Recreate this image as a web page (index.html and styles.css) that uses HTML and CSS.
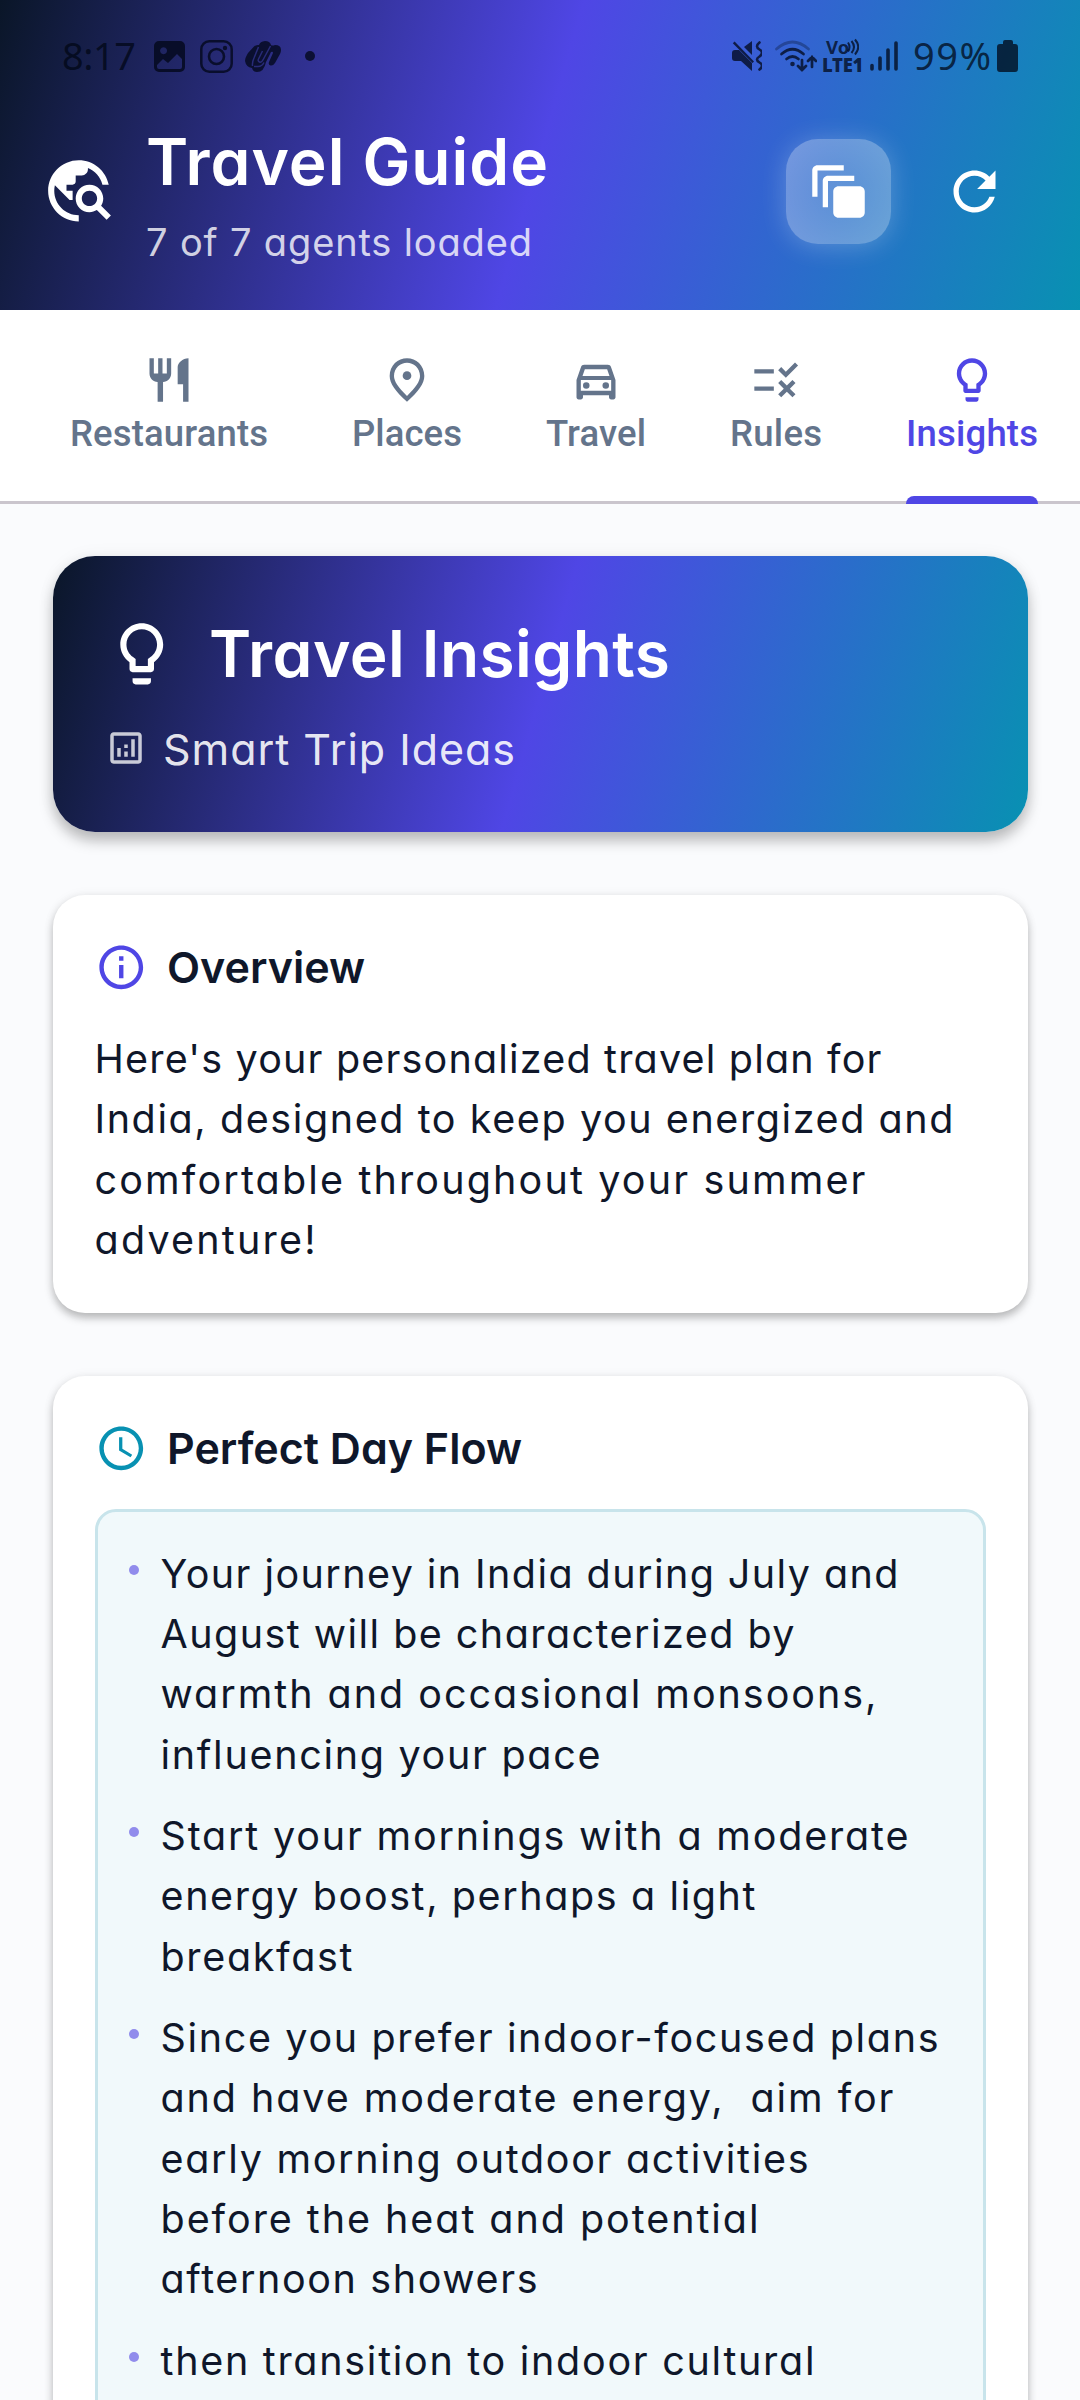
FILE: index.html
```html
<!DOCTYPE html>
<html lang="en">
<head>
<meta charset="utf-8">
<title>Travel Guide</title>
<link rel="stylesheet" href="styles.css">
</head>
<body>
<header class="header">
  <div class="status">
    <div class="status-left">
      <span class="status-time" data-width="74">8:17</span>
      <svg class="st-photo" viewBox="0 0 31 31"><path fill-rule="evenodd" d="M5 0h21a5 5 0 0 1 5 5v21a5 5 0 0 1-5 5H5a5 5 0 0 1-5-5V5a5 5 0 0 1 5-5zM9.500 6.300a3.500 3.500 0 1 0 .1 0zM3 24v2a2 2 0 0 0 2 2h21a2 2 0 0 0 2-2v-8l-5-5-9 9-5-4z"/></svg>
      <svg class="st-insta" viewBox="0 0 33 33"><rect x="1.300" y="1.300" width="30.400" height="30.400" rx="8" fill="none" stroke="currentColor" stroke-width="2.500"/><circle cx="16.500" cy="16.500" r="7.500" fill="none" stroke="currentColor" stroke-width="2.600"/><circle cx="25" cy="8" r="2.200"/></svg>
      <svg class="st-brand" viewBox="0 0 36 31"><path d="M9 5.500q2-2 5-1.500 1-3.500 6-4 5 0 6 4 1 1 4 0 6 0 6 5 0 2-1 4l-5 9q-2 3-4.500 2.500T24 21l4-9q0-2-2-1l-5 10q-2 10-9 10-4 0-5-4-6-1-7-7 0-3 3-8z"/><path d="M13.500 6 9 17q-2 4-1.500 8M25.500 5l-7 13q-2 4-4 3t-1-3l4-8M9 25.500h4q4 0 6-4" fill="none" stroke="#282b78" stroke-width="1.500"/></svg>
      <i class="st-dot"></i>
    </div>
    <div class="status-right">
      <svg class="st-mute" viewBox="0 0 30 30"><path d="M0 12q0-3 3-3h4l13 13v8L9 20H3q-3 0-3-3zM12 6l8-6v14zM2.600.6 22 20.500l-1.500 1.500L.8 2.300z"/><path d="M27.500 1.500q-5 4 0 7t0 7q-5 3 0 6t0 7" fill="none" stroke="currentColor" stroke-width="2.600" stroke-linecap="round"/></svg>
      <svg class="st-wifi" viewBox="0 0 42 32"><g fill="none" stroke="currentColor" stroke-width="2.700" stroke-linecap="round"><path d="M1.500 9q16-14 32 0" opacity=".4"/><path d="M6.500 14q11-9.500 22 0M11.500 19q6-5 12 0"/><path d="M27 20v10m-4-4 4 4 4-4M37 27V17m-4 4 4-4 4 4"/></g><circle cx="17.500" cy="24" r="2.300"/></svg>
      <div class="volte"><span data-width="21">Vo</span><svg viewBox="0 0 12 18"><path d="M1 4.500q3 4.500 0 9M4.500 3q5 6 0 12M8 1.500q6.500 7.500 0 15" fill="none" stroke="currentColor" stroke-width="2"/></svg><b data-width="38">LTE1</b></div>
      <svg class="st-signal" viewBox="0 0 28 30"><path d="M2 24.500V28M10 17v11M18 9v19M26 2v26" stroke="currentColor" stroke-width="3.600" stroke-linecap="round"/></svg>
      <span class="status-pct" data-width="78">99%</span>
      <svg class="st-battery" viewBox="0 0 21 32"><path d="M8 0h6q2 0 2 2v2h2q3 0 3 3v22q0 3-3 3H3q-3 0-3-3V7q0-3 3-3h3V2q0-2 2-2z"/></svg>
    </div>
  </div>
  <div class="appbar">
    <svg class="app-icon" viewBox="0 0 24 24"><path d="M19.300 16.900c.4-.7.7-1.500.7-2.400 0-2.500-2-4.500-4.500-4.500S11 12 11 14.500s2 4.500 4.500 4.500c.9 0 1.700-.3 2.400-.7l3.200 3.200 1.400-1.400-3.200-3.200zm-3.800.1c-1.400 0-2.500-1.100-2.500-2.500s1.100-2.500 2.500-2.500 2.500 1.100 2.500 2.500-1.100 2.500-2.500 2.500zM12 20v2C6.480 22 2 17.520 2 12S6.480 2 12 2c4.840 0 8.870 3.440 9.800 8h-2.070c-.64-2.460-2.400-4.470-4.730-5.410V5c0 1.100-.9 2-2 2h-2v2c0 .55-.45 1-1 1H8v2h2v3H9l-4.790-4.790C4.080 10.790 4 11.380 4 12c0 4.410 3.590 8 8 8z"/></svg>
    <div class="app-text">
      <h1 class="app-title"><span data-width="402">Travel Guide</span></h1>
      <p class="app-sub"><span data-width="386">7 of 7 agents loaded</span></p>
    </div>
    <button class="tool tool-active"><svg viewBox="0 0 24 24"><path d="M14 2H4c-1.100 0-2 .9-2 2v10h2V4h10V2zm4 4H8c-1.100 0-2 .9-2 2v10h2V8h10V6zm2 4h-8c-1.100 0-2 .9-2 2v8c0 1.100.9 2 2 2h8c1.100 0 2-.9 2-2v-8c0-1.100-.9-2-2-2z"/></svg></button>
    <button class="tool"><svg viewBox="0 0 24 24"><path d="M17.650 6.350C16.200 4.900 14.210 4 12 4c-4.420 0-7.990 3.580-7.990 8s3.570 8 7.990 8c3.730 0 6.840-2.550 7.730-6h-2.080c-.82 2.330-3.040 4-5.650 4-3.310 0-6-2.690-6-6s2.690-6 6-6c1.660 0 3.140.69 4.220 1.780L13 11h7V4l-2.350 2.350z"/></svg></button>
  </div>
</header>

<nav class="tabs">
  <a class="tab"><svg viewBox="0 0 24 24"><path d="M11 9H9V2H7v7H5V2H3v7c0 2.120 1.660 3.840 3.750 3.970V22h2.500v-9.030C11.340 12.840 13 11.120 13 9V2h-2v7zm5-3v8h2.500v8H21V2c-2.760 0-5 2.240-5 4z"/></svg><span data-width="198">Restaurants</span></a>
  <a class="tab"><svg viewBox="0 0 24 24"><path d="M12 2c4.200 0 8 3.220 8 8.200 0 3.320-2.670 7.250-8 11.800-5.330-4.550-8-8.480-8-11.800C4 5.220 7.800 2 12 2m0 2C9.020 4 6 6.240 6 10.200c0 2.340 1.950 5.440 6 9.140 4.050-3.700 6-6.790 6-9.140C18 6.240 14.980 4 12 4"/><circle cx="12" cy="10" r="2"/></svg><span data-width="110">Places</span></a>
  <a class="tab"><svg viewBox="0 0 24 24"><path d="M18.920 6.010C18.720 5.420 18.160 5 17.500 5h-11c-.66 0-1.210.42-1.420 1.010L3 12v8c0 .55.45 1 1 1h1c.55 0 1-.45 1-1v-1h12v1c0 .55.45 1 1 1h1c.55 0 1-.45 1-1v-8l-2.080-5.990zM6.850 7h10.290l1.080 3.110H5.770L6.850 7zM19 17H5v-5h14v5z"/><circle cx="7.500" cy="14.500" r="1.500"/><circle cx="16.500" cy="14.500" r="1.500"/></svg><span data-width="100">Travel</span></a>
  <a class="tab"><svg viewBox="0 0 24 24"><path d="M16.540 11L13 7.460l1.410-1.410 2.120 2.120 4.240-4.240 1.410 1.410L16.540 11zM11 7H2v2h9V7zm10 6.410L19.590 12 17 14.590 14.410 12 13 13.410 15.590 16 13 18.590 14.410 20 17 17.410 19.590 20 21 18.590 18.410 16 21 13.410zM11 15H2v2h9v-2z"/></svg><span data-width="92">Rules</span></a>
  <a class="tab tab-active"><svg viewBox="0 0 24 24"><path d="M9 21c0 .55.45 1 1 1h4c.55 0 1-.45 1-1v-1H9v1zm3-19C8.140 2 5 5.140 5 9c0 2.380 1.190 4.470 3 5.740V17c0 .55.45 1 1 1h6c.55 0 1-.45 1-1v-2.260c1.810-1.270 3-3.360 3-5.740 0-3.860-3.140-7-7-7zm2.850 11.100l-.85.6V16h-4v-2.300l-.85-.6C7.800 12.160 7 10.630 7 9c0-2.760 2.240-5 5-5s5 2.240 5 5c0 1.630-.8 3.160-2.150 4.100z"/></svg><span data-width="132">Insights</span></a>
</nav>

<main class="content">
  <section class="hero">
    <div class="hero-top">
      <svg viewBox="0 0 24 24"><path d="M9 21c0 .55.45 1 1 1h4c.55 0 1-.45 1-1v-1H9v1zm3-19C8.140 2 5 5.140 5 9c0 2.380 1.190 4.470 3 5.740V17c0 .55.45 1 1 1h6c.55 0 1-.45 1-1v-2.260c1.810-1.270 3-3.360 3-5.740 0-3.860-3.140-7-7-7zm2.850 11.100l-.85.6V16h-4v-2.300l-.85-.6C7.800 12.160 7 10.630 7 9c0-2.760 2.240-5 5-5s5 2.240 5 5c0 1.630-.8 3.160-2.150 4.100z"/></svg>
      <h2><span data-width="461">Travel Insights</span></h2>
    </div>
    <div class="hero-sub">
      <svg viewBox="0 0 24 24"><path d="M19 3H5c-1.100 0-2 .9-2 2v14c0 1.100.9 2 2 2h14c1.100 0 2-.9 2-2V5c0-1.100-.9-2-2-2zm0 16H5V5h14v14zM7 12h2v5H7zM15 7h2v10h-2zM11 14h2v3h-2zM11 10h2v2h-2z"/></svg>
      <p><span data-width="352">Smart Trip Ideas</span></p>
    </div>
  </section>

  <section class="card">
    <div class="card-head">
      <svg class="indigo" viewBox="0 0 24 24"><path d="M11 7h2v2h-2zm0 4h2v6h-2zm1-9C6.480 2 2 6.480 2 12s4.480 10 10 10 10-4.480 10-10S17.520 2 12 2zm0 18c-4.410 0-8-3.590-8-8s3.590-8 8-8 8 3.590 8 8-3.590 8-8 8z"/></svg>
      <h3><span data-width="198">Overview</span></h3>
    </div>
    <p class="body-text">
      <span data-width="787">Here's your personalized travel plan for</span>
      <span data-width="859">India, designed to keep you energized and</span>
      <span data-width="771">comfortable throughout your summer</span>
      <span data-width="221">adventure!</span>
    </p>
  </section>

  <section class="card card-flow">
    <div class="card-head">
      <svg class="teal" viewBox="0 0 24 24"><path d="M11.990 2C6.470 2 2 6.480 2 12s4.470 10 9.990 10C17.520 22 22 17.520 22 12S17.520 2 11.990 2zM12 20c-4.420 0-8-3.580-8-8s3.580-8 8-8 8 3.580 8 8-3.580 8-8 8zm.5-13H11v6l5.250 3.150.75-1.230-4.500-2.670z"/></svg>
      <h3><span data-width="355">Perfect Day Flow</span></h3>
    </div>
    <ul class="flow">
      <li class="body-text">
        <span data-width="738">Your journey in India during July and</span>
        <span data-width="634">August will be characterized by</span>
        <span data-width="716">warmth and occasional monsoons,</span>
        <span data-width="440">influencing your pace</span>
      </li>
      <li class="body-text">
        <span data-width="748">Start your mornings with a moderate</span>
        <span data-width="595">energy boost, perhaps a light</span>
        <span data-width="192">breakfast</span>
      </li>
      <li class="body-text">
        <span data-width="778">Since you prefer indoor-focused plans</span>
        <span data-width="733">and have moderate energy,&nbsp; aim for</span>
        <span data-width="648">early morning outdoor activities</span>
        <span data-width="598">before the heat and potential</span>
        <span data-width="377">afternoon showers</span>
      </li>
      <li class="body-text">
        <span data-width="654">then transition to indoor cultural</span>
      </li>
    </ul>
  </section>
</main>
<script src="fit.js"></script>
</body>
</html>
```
FILE: styles.css
```css
* { box-sizing: border-box; margin: 0; padding: 0; }

html, body { height: 2400px; overflow: hidden; }

body {
  width: 1080px;
  display: flex;
  flex-direction: column;
  background: #fafbfd;
  color: #0f172a;
  font-family: Inter, "Liberation Sans", sans-serif;
  font-feature-settings: "cv11";
}

svg { display: block; flex: none; fill: currentColor; }
span[data-width], b[data-width] { display: inline-block; white-space: nowrap; }

/* Header */
.header {
  height: 310px;
  flex: none;
  background: linear-gradient(106deg, #0a1628 0%, #4f46e5 50%, #0891b2 100%);
}

.status {
  height: 112px;
  padding: 0 62px 0 62px;
  display: flex;
  justify-content: space-between;
  align-items: center;
  color: rgba(0, 6, 20, .74);
  font-family: "Noto Sans", sans-serif;
  font-size: 38px;
  line-height: 52px;
  font-feature-settings: normal;
}
.status-left, .status-right { display: flex; align-items: center; }
.status-time, .status-pct { padding-bottom: 3px; }
.st-photo { width: 31px; height: 31px; margin-left: 18px; }
.st-insta { width: 33px; height: 33px; margin-left: 15px; }
.st-brand { width: 36px; height: 31px; margin-left: 12px; }
.st-dot { width: 10px; height: 10px; margin-left: 24px; border-radius: 50%; background: currentColor; }
.st-mute { width: 30px; height: 30px; }
.st-wifi { width: 42px; height: 32px; margin-left: 13px; }
.volte {
  display: grid;
  grid-template-columns: 25px 14px;
  width: 39px;
  margin-left: 5px;
  font-size: 18.500px;
  font-weight: 700;
  line-height: 18px;
}
.volte span { padding-left: 4px; }
.volte svg { width: 12px; height: 18px; }
.volte b { grid-column: 1 / 3; }
.st-signal { width: 28px; height: 30px; margin-left: 9px; }
.status-pct { margin-left: 15px; }
.st-battery { width: 21px; height: 32px; margin-left: 6px; }

.appbar {
  height: 158px;
  padding: 0 53px 0 42px;
  display: flex;
  align-items: center;
  color: #fff;
}
.app-icon { width: 73.5px; height: 73.5px; margin-right: 30.5px; }
.app-text { flex: 1; display: flex; flex-direction: column; gap: 8px; }
.app-title { font-size: 64px; line-height: 92px; font-weight: 560; }
.app-sub { font-size: 38px; line-height: 50px; padding-top: 1px; color: rgba(255, 255, 255, .8); }
.tool {
  width: 105px;
  height: 105px;
  display: flex;
  align-items: center;
  justify-content: center;
  border: 0;
  border-radius: 32px;
  background: none;
  color: #fff;
}
.tool svg { width: 63px; height: 63px; }
.tool + .tool { margin-left: 31px; }
.tool-active {
  background: radial-gradient(circle, rgba(255, 255, 255, .26) 30%, rgba(255, 255, 255, .34) 100%);
  box-shadow: 0 2px 26px rgba(255, 255, 255, .24);
}

/* Tabs */
.tabs {
  height: 194px;
  flex: none;
  padding: 44px 0 0 70px;
  display: flex;
  gap: 84px;
  background: #fff;
  border-bottom: 3px solid #cac5cd;
  color: #64748b;
}
.tab {
  position: relative;
  display: flex;
  flex-direction: column;
  align-items: center;
  flex: none;
  font: 500 36.500px/46px Roboto, sans-serif;
  font-feature-settings: normal;
}
.tab svg { width: 52px; height: 52px; margin-bottom: 5px; }
.tab-active { color: #4f46e5; }
.tab-active::after {
  content: "";
  position: absolute;
  left: 0;
  right: 0;
  bottom: -3px;
  height: 8px;
  border-radius: 8px 8px 0 0;
  background: #4f46e5;
}

/* Content */
.content {
  flex: 1;
  min-height: 0;
  overflow: hidden;
  padding: 52px 52.5px 0;
}

.hero {
  height: 276px;
  padding: 49px 52.5px;
  border-radius: 42px;
  background: linear-gradient(105.8deg, #0a1628 0%, #4f46e5 50%, #0891b2 100%);
  box-shadow: 0 9px 14px rgba(0, 0, 0, .25), 0 0 18px rgba(0, 0, 0, .05);
  color: #fff;
}
.hero-top { display: flex; align-items: center; gap: 30.5px; height: 98px; }
.hero-top svg { width: 73.5px; height: 73.5px; }
.hero-top h2 { font-size: 64px; line-height: 98px; font-weight: 560; }
.hero-sub { display: flex; align-items: center; gap: 16px; height: 64px; margin-top: 13px; color: rgba(255, 255, 255, .9); }
.hero-sub svg { width: 42px; height: 42px; opacity: .85; }
.hero-sub p { font-size: 43px; line-height: 62px; padding-top: 1px; }

.card {
  margin-top: 63px;
  height: 417.5px;
  padding: 42px;
  border-radius: 32px;
  background: #fff;
  box-shadow: 0 5px 8px rgba(0, 0, 0, .26), 0 0 12px rgba(0, 0, 0, .05);
}
.card-head { display: flex; align-items: center; gap: 20px; height: 61px; }
.card-head svg { width: 52.5px; height: 52.5px; }
.card-head h3 { font-size: 43px; line-height: 61px; font-weight: 560; }
.indigo { color: #4f46e5; }
.teal { color: #0891b2; }

.body-text {
  display: flex;
  flex-direction: column;
  align-items: flex-start;
  font-size: 39.500px;
  line-height: 60.350px;
}
.card > .body-text { padding-top: 31px; }

.card-flow { height: 1400px; }
.flow {
  list-style: none;
  display: flex;
  flex-direction: column;
  gap: 21px;
  height: 1400px;
  margin-top: 30px;
  padding: 32px 31px;
  border: 3px solid #c8e4eb;
  border-radius: 21px;
  background: #f1f9fb;
}
.flow li { position: relative; padding-left: 32px; }
.flow li::before {
  content: "";
  position: absolute;
  left: 0;
  top: 21px;
  width: 10.500px;
  height: 10.500px;
  border-radius: 50%;
  background: #918cec;
}
```
FILE: fit.js
```js
// Tracks each line of text so that it fills its measure.
function fitLines() {
  document.querySelectorAll('[data-width]').forEach(function (el) {
    el.style.letterSpacing = '0px';
    var natural = el.getBoundingClientRect().width - parseFloat(getComputedStyle(el).paddingLeft);
    var gaps = el.textContent.length - 1;
    var step = (parseFloat(el.dataset.width) - natural) / gaps;
    el.style.letterSpacing = step.toFixed(3) + 'px';
    el.style.marginRight = (-step).toFixed(3) + 'px';
  });
}
fitLines();
```
